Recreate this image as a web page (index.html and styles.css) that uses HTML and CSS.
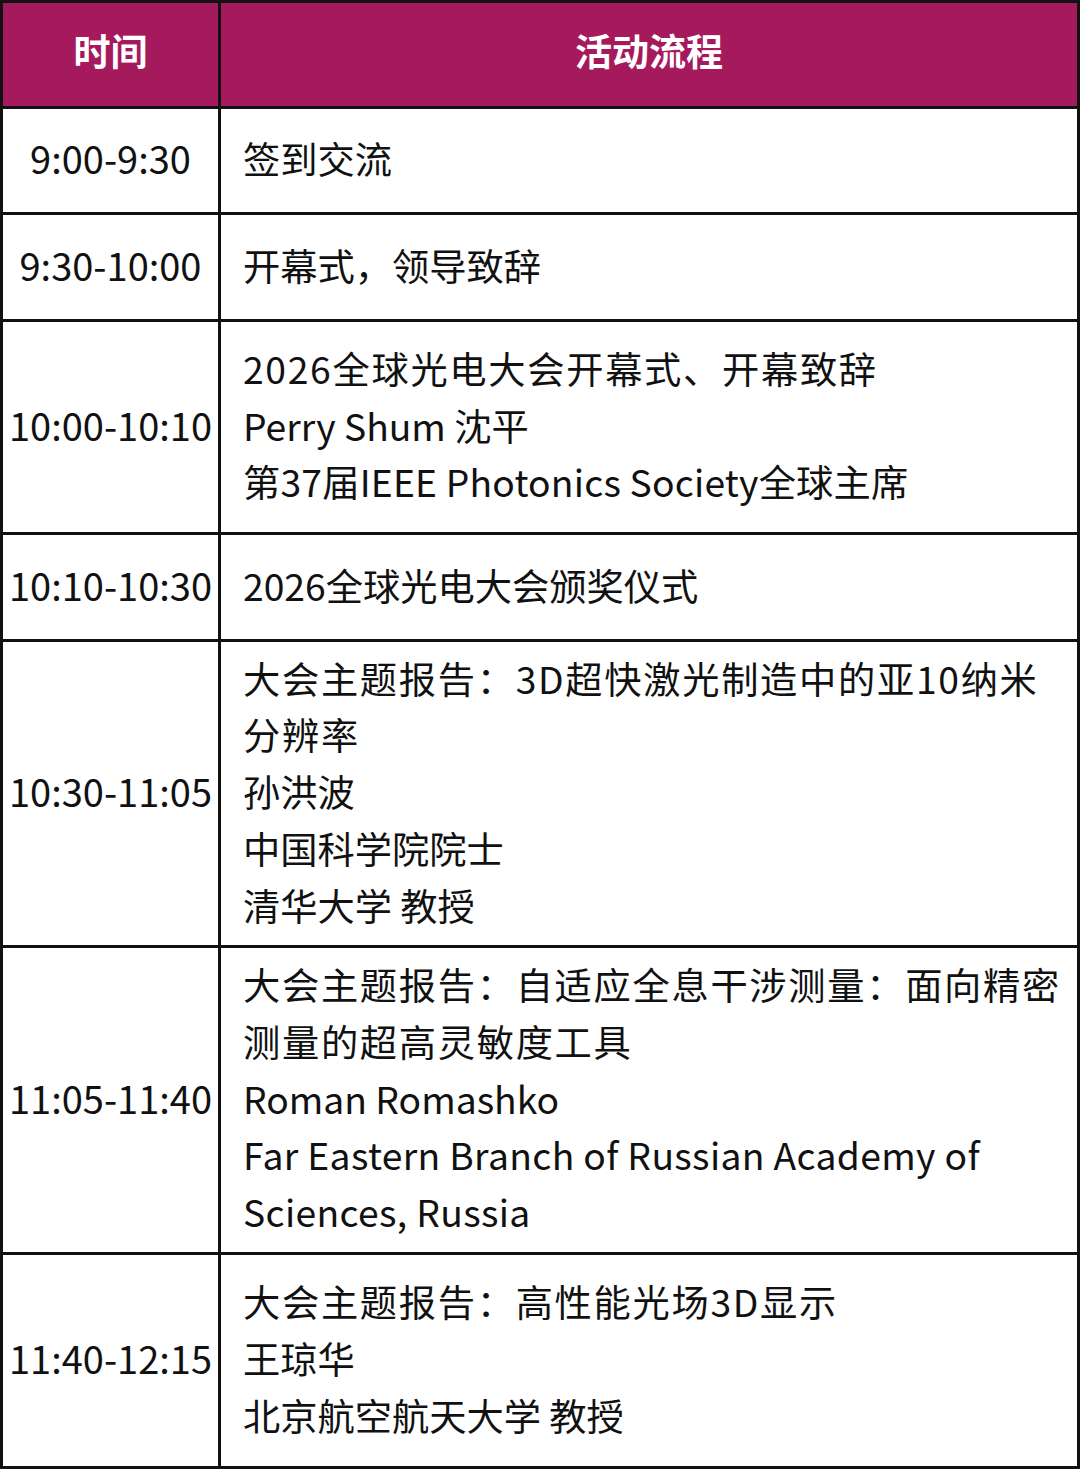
FILE: index.html
```html
<!DOCTYPE html>
<html lang="zh-CN">
<head>
<meta charset="utf-8">
<link rel="stylesheet" href="styles.css">
</head>
<body>
<div class="schedule">
  <div class="cell head time h0">时间</div>
  <div class="cell head h0">活动流程</div>

  <div class="cell time h1">9:00-9:30</div>
  <div class="cell body h1"><p>签到交流</p></div>

  <div class="cell time h2">9:30-10:00</div>
  <div class="cell body h2"><p>开幕式，领导致辞</p></div>

  <div class="cell time h3">10:00-10:10</div>
  <div class="cell body h3"><p class="title">2026全球光电大会开幕式、开幕致辞</p><p>Perry Shum 沈平</p><p class="loose-s">第37届IEEE Photonics Society全球主席</p></div>

  <div class="cell time h4">10:10-10:30</div>
  <div class="cell body h4"><p>2026全球光电大会颁奖仪式</p></div>

  <div class="cell time h5">10:30-11:05</div>
  <div class="cell body h5"><p class="title">大会主题报告：3D超快激光制造中的亚10纳米分辨率</p><p>孙洪波</p><p>中国科学院院士</p><p>清华大学 教授</p></div>

  <div class="cell time h6">11:05-11:40</div>
  <div class="cell body h6"><p class="title">大会主题报告：自适应全息干涉测量：面向精密测量的超高灵敏度工具</p><p>Roman Romashko</p><p class="loose-m">Far Eastern Branch of Russian Academy of Sciences, Russia</p></div>

  <div class="cell time h7">11:40-12:15</div>
  <div class="cell body h7"><p class="title">大会主题报告：高性能光场3D显示</p><p>王琼华</p><p>北京航空航天大学 教授</p></div>
</div>
</body>
</html>
```
FILE: styles.css
```css
html, body {
  margin: 0;
  padding: 0;
  background: #ffffff;
}

.schedule {
  width: 1080px;
  box-sizing: border-box;
  display: grid;
  grid-template-columns: 215px 1fr;
  gap: 3px;
  border: 3px solid #111111;
  background: #111111;
  font-family: "Noto Sans CJK SC", "Noto Sans", sans-serif;
  color: #111111;
  font-size: 37.25px;
  line-height: 56.75px;
}

.cell {
  background: #ffffff;
  display: flex;
  flex-direction: column;
  justify-content: center;
  box-sizing: border-box;
  padding-bottom: 4px;
}

.cell.time {
  align-items: center;
  text-align: center;
  white-space: nowrap;
  font-size: 38px;
}

.cell.body {
  padding: 0 8px 4px 22px;
}

.cell p {
  margin: 0;
}

.cell p.title {
  letter-spacing: 1.7px;
}

.cell p.loose-s {
  letter-spacing: 0.2px;
}

.cell p.loose-m {
  letter-spacing: 0.35px;
}

.cell.head {
  background: #a5195d;
  color: #ffffff;
  font-weight: 700;
  font-size: 37px;
  align-items: center;
  text-align: center;
  padding-bottom: 8px;
}

.h0 { height: 103px; }
.h1 { height: 103px; }
.h2 { height: 104px; }
.h3 { height: 210px; }
.h4 { height: 104px; }
.h5 { height: 303px; }
.h6 { height: 304px; }
.h7 { height: 211px; }
```
